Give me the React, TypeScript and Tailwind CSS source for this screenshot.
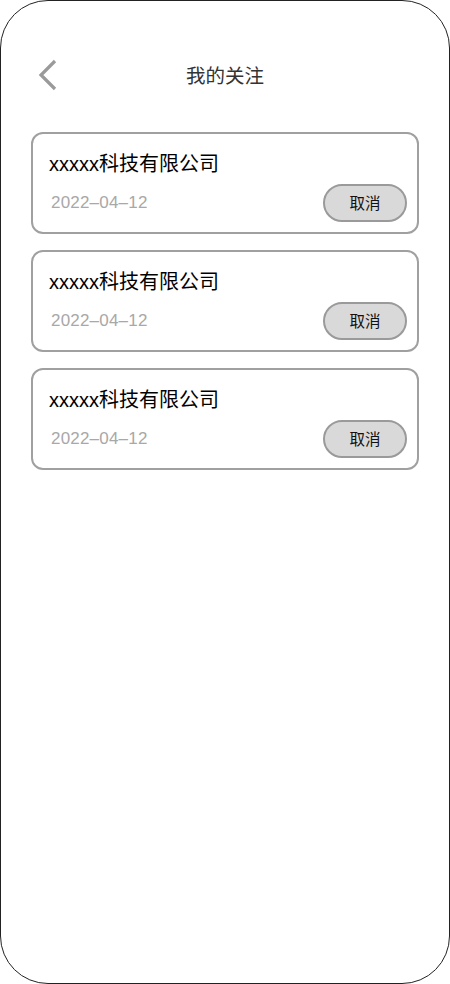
import React from 'react';

const items = [
  { name: 'xxxxx科技有限公司', date: '2022–04–12' },
  { name: 'xxxxx科技有限公司', date: '2022–04–12' },
  { name: 'xxxxx科技有限公司', date: '2022–04–12' },
];

const App = () => {
  return (
    <div className="w-[450px] h-[984px] bg-white font-['Liberation_Sans','Noto_Sans_CJK_SC',sans-serif]">
      <div className="w-full h-full border border-[#222] rounded-[48px] overflow-hidden">
        {/* Header */}
        <div className="relative flex items-center justify-center h-[50px] mt-[49px]">
          <button className="absolute left-[35px] top-[9px]">
            <svg width="24" height="32" viewBox="0 0 24 32" fill="none">
              <path d="M19 2 L5 16 L19 30" stroke="#9a9a9a" strokeWidth="3.2" />
            </svg>
          </button>
          <h1 className="text-[19.5px] text-[#333] font-['Noto_Sans_CJK_SC',sans-serif]">我的关注</h1>
        </div>

        {/* List */}
        <div className="flex flex-col gap-[16px] px-[30px] mt-[32px]">
          {items.map((item, i) => (
            <div
              key={i}
              className="h-[102px] border-2 border-[#a0a0a0] rounded-[12px] pl-[16px] pr-[10px] pt-[17px]"
            >
              <div className="text-[20px] leading-[26px] text-black">{item.name}</div>
              <div className="flex items-center justify-between mt-[7px]">
                <span className="pl-[2px] text-[17px] tracking-[0.2px] text-[#a8a8a8]">{item.date}</span>
                <button className="w-[84px] h-[38px] rounded-full bg-[#d9d9d9] border-2 border-[#9a9a9a] text-[15.5px] text-[#111] font-['Noto_Sans_CJK_SC',sans-serif]">
                  取消
                </button>
              </div>
            </div>
          ))}
        </div>
      </div>
    </div>
  );
};

export default App;
